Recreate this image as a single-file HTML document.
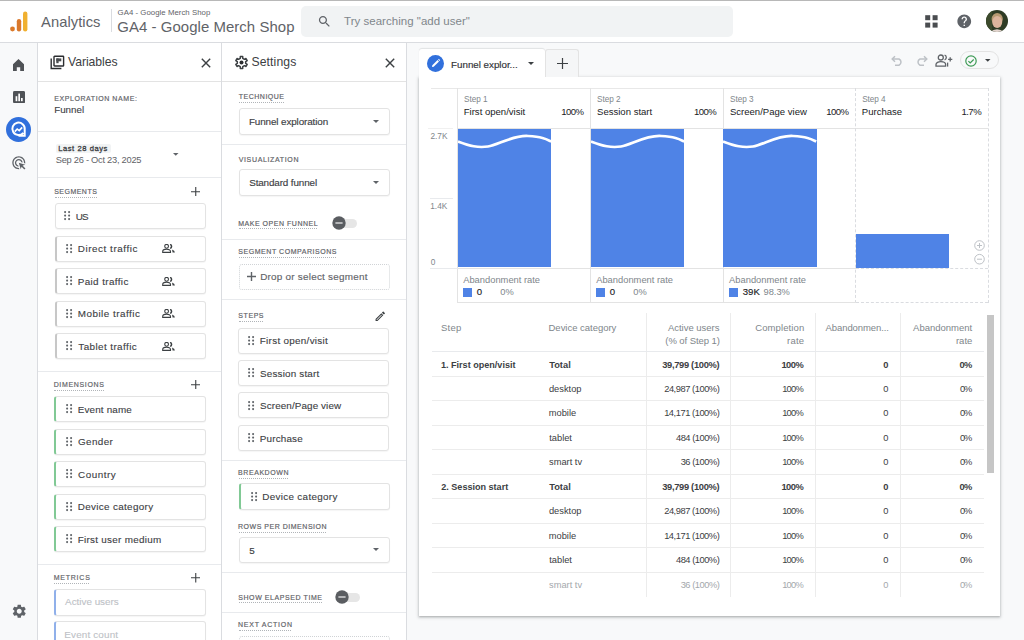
<!DOCTYPE html><html><head><meta charset="utf-8"><style>
html,body{margin:0;padding:0;}
body{width:1024px;height:640px;overflow:hidden;position:relative;background:#f8f9fa;font-family:"Liberation Sans",sans-serif;}
svg{display:block}
</style></head><body>
<div style="position:absolute;left:0px;top:0px;width:1024px;height:43px;background:#fff"></div>
<div style="position:absolute;left:0px;top:0px;width:1024px;height:1px;background:#b8b8b8"></div>
<div style="position:absolute;left:0px;top:42px;width:1024px;height:1px;background:#dadce0"></div>
<svg style="position:absolute;left:9px;top:11px;" width="20" height="22" viewBox="0 0 20 22"><circle cx="3.5" cy="18" r="2.4" fill="#dc7a2a"/><rect x="7.8" y="8" width="4.4" height="12.4" rx="2.2" fill="#d9782c"/><rect x="14" y="0.6" width="4.4" height="19.8" rx="2.2" fill="#f0b030"/></svg>
<div style="position:absolute;left:41.00px;top:15.00px;font-size:14.74px;line-height:14.74px;color:#5f6368;font-weight:normal;letter-spacing:0.060px;white-space:nowrap;">Analytics</div>
<div style="position:absolute;left:111px;top:9px;width:1px;height:23px;background:#dadce0"></div>
<div style="position:absolute;left:117.61px;top:9.00px;font-size:7.8px;line-height:7.8px;color:#5f6368;font-weight:normal;letter-spacing:0.034px;white-space:nowrap;">GA4 - Google Merch Shop</div>
<div style="position:absolute;left:117.25px;top:20.00px;font-size:14.94px;line-height:14.94px;color:#5f6368;font-weight:normal;letter-spacing:0.055px;white-space:nowrap;">GA4 - Google Merch Shop</div>
<div style="position:absolute;left:301px;top:6px;width:432px;height:31px;background:#f1f3f4;border-radius:5px"></div>
<svg style="position:absolute;left:317.0px;top:14.0px;" width="15" height="15" viewBox="0 0 24 24"><path fill="#5f6368" d="M15.5 14h-.79l-.28-.27C15.41 12.59 16 11.11 16 9.5 16 5.91 13.09 3 9.5 3S3 5.910 3 9.5 5.91 16 9.5 16c1.61 0 3.09-.59 4.230-1.57l.27.28v.79l5 4.99L20.49 19l-4.99-5zm-6 0C7.01 14 5 11.99 5 9.5S7.01 5 9.5 5 14 7.01 14 9.5 11.99 14 9.5 14z"/></svg>
<div style="position:absolute;left:344.07px;top:16.00px;font-size:11.47px;line-height:11.47px;color:#80868b;font-weight:normal;letter-spacing:0.034px;white-space:nowrap;">Try searching "add user"</div>
<svg style="position:absolute;left:925.3px;top:14.8px;" width="13" height="13" viewBox="0 0 13 13"><rect x="0.2" y="0.2" width="5" height="5" fill="#4a4d50"/><rect x="7.6" y="0.2" width="5" height="5" fill="#4a4d50"/><rect x="0.2" y="7.6" width="5" height="5" fill="#4a4d50"/><rect x="7.6" y="7.6" width="5" height="5" fill="#4a4d50"/></svg>
<svg style="position:absolute;left:956.25px;top:12.95px;" width="16.5" height="16.5" viewBox="0 0 24 24"><path fill="#5f6368" d="M12 2C6.48 2 2 6.48 2 12s4.48 10 10 10 10-4.48 10-10S17.52 2 12 2zm1 17h-2v-2h2v2zm2.07-7.75l-.9.92C13.45 12.9 13 13.5 13 15h-2v-.5c0-1.1.45-2.1 1.17-2.83l1.24-1.26c.37-.36.59-.86.59-1.410 0-1.1-.9-2-2-2s-2 .9-2 2H8c0-2.21 1.79-4 4-4s4 1.79 4 4c0 .88-.36 1.68-.93 2.25z"/></svg>
<svg style="position:absolute;left:986px;top:10.2px;" width="22" height="22" viewBox="0 0 22 22"><defs><clipPath id="av"><circle cx="11" cy="11" r="11"/></clipPath></defs><g clip-path="url(#av)"><rect width="22" height="22" fill="#2e3b24"/><rect x="0" y="0" width="6" height="22" fill="#3c4a2c"/><ellipse cx="11.2" cy="9" rx="5.6" ry="6" fill="#b79a72"/><ellipse cx="11.2" cy="12" rx="5" ry="6" fill="#dcb49c"/><path d="M4 22 Q11 16.5 18 22z" fill="#e4d6d0"/></g></svg>
<div style="position:absolute;left:0px;top:43px;width:37px;height:597px;background:#f8f9fa"></div>
<div style="position:absolute;left:37px;top:43px;width:1px;height:597px;background:#dadce0"></div>
<svg style="position:absolute;left:13.4px;top:58.8px;" width="11" height="12" viewBox="0 0 11 12"><path d="M0 5.3 L5.5 0 L11 5.3 V12 H7.2 V8.2 H3.8 V12 H0 Z" fill="#4f5256"/></svg>
<svg style="position:absolute;left:13px;top:91.3px;" width="12.2" height="12.2" viewBox="0 0 12.2 12.2"><rect width="12.2" height="12.2" rx="1.5" fill="#4f5256"/><rect x="2.6" y="5.2" width="1.7" height="5" fill="#fff"/><rect x="5.3" y="2.6" width="1.7" height="7.6" fill="#fff"/><rect x="8" y="7" width="1.7" height="3.2" fill="#fff"/></svg>
<svg style="position:absolute;left:6px;top:117.3px;" width="25" height="25" viewBox="0 0 25 25"><circle cx="12.5" cy="12.5" r="12.5" fill="#3170dc"/><path d="M17.3 15.8 A6.2 6.2 0 1 1 18.7 12.5 V18.7 H12.5" fill="none" stroke="#fff" stroke-width="2"/><path d="M8.8 14.6 L11.2 12 L13.2 13.6 L16.2 10.4" fill="none" stroke="#fff" stroke-width="1.6"/></svg>
<svg style="position:absolute;left:10.7px;top:154.7px;" width="15.6" height="15.6" viewBox="0 0 24 24"><path fill="#5f6368" d="M11.71 17.99C8.53 17.84 6 15.22 6 12c0-3.31 2.69-6 6-6 3.22 0 5.84 2.53 5.99 5.71l-2.1-.63C15.48 9.31 13.89 8 12 8c-2.21 0-4 1.790-4 4 0 1.89 1.31 3.48 3.08 3.89l.63 2.1zM22 12c0 .3-.01.6-.04.9l-1.97-.59c.01-.1.01-.21.01-.31 0-4.42-3.58-8-8-8s-8 3.58-8 8 3.58 8 8 8c.1 0 .21 0 .31-.01l.59 1.97c-.3.03-.6.04-.9.04-5.52 0-10-4.48-10-10S6.48 2 12 2s10 4.48 10 10zm-3.77 4.26L22 15l-10-3 3 10 1.26-3.77 4.27 4.27 1.74-1.74-4.27-4.27z"/></svg>
<svg style="position:absolute;left:10.75px;top:603.15px;" width="16.5" height="16.5" viewBox="0 0 24 24"><path fill="#5f6368" d="M19.14 12.94c.04-.3.06-.61.06-.94 0-.32-.02-.64-.07-.94l2.03-1.58c.18-.14.23-.41.12-.61l-1.92-3.32c-.12-.22-.37-.29-.59-.22l-2.39.96c-.5-.38-1.03-.7-1.62-.94l-.36-2.54c-.04-.24-.24-.41-.48-.41h-3.84c-.24 0-.43.17-.47.41l-.36 2.54c-.59.24-1.130.57-1.62.94l-2.39-.96c-.22-.08-.47 0-.59.22L2.74 8.87c-.12.21-.08.47.12.61l2.03 1.58c-.05.3-.09.63-.09.94s.02.64.07.94l-2.03 1.58c-.18.14-.23.41-.12.61l1.92 3.32c.12.22.37.29.59.22l2.39-.96c.5.38 1.03.7 1.62.94l.36 2.54c.05.24.24.41.48.41h3.84c.24 0 .44-.17.47-.41l.36-2.54c.59-.24 1.13-.56 1.62-.94l2.39.96c.22.08.47 0 .59-.22l1.92-3.32c.12-.22.07-.47-.12-.61l-2.01-1.58zM12 15.6c-1.98 0-3.6-1.62-3.6-3.6s1.62-3.6 3.6-3.6 3.6 1.62 3.6 3.6-1.62 3.6-3.6 3.6z"/></svg>
<div style="position:absolute;left:38px;top:43px;width:183px;height:597px;background:#fff"></div>
<div style="position:absolute;left:221px;top:43px;width:1px;height:597px;background:#dadce0"></div>
<svg style="position:absolute;left:49.5px;top:54.5px;" width="15" height="15" viewBox="0 0 15 15"><path d="M1.2 3.5 V13.5 H11.4" fill="none" stroke="#2b2d30" stroke-width="1.4"/><rect x="4" y="1.2" width="9.6" height="9.8" rx="0.6" fill="none" stroke="#2b2d30" stroke-width="1.4"/><rect x="6.3" y="3.4" width="5" height="2.9" fill="#4a4d50"/><rect x="6.3" y="3.4" width="2.3" height="4.8" fill="#4a4d50"/></svg>
<div style="position:absolute;left:68.00px;top:56.00px;font-size:12.2px;line-height:12.2px;color:#3c4043;font-weight:normal;letter-spacing:-0.041px;white-space:nowrap;">Variables</div>
<svg style="position:absolute;left:200.5px;top:57.8px;" width="10" height="10" viewBox="0 0 10 10"><path d="M0.8 0.8 L9.2 9.2 M9.2 0.8 L0.8 9.2" stroke="#3c4043" stroke-width="1.4"/></svg>
<div style="position:absolute;left:38px;top:81px;width:183px;height:1px;background:#e3e3e3"></div>
<div style="position:absolute;left:54.19px;top:95.00px;font-size:7.0px;line-height:7.0px;color:#5f6368;font-weight:normal;letter-spacing:0.579px;white-space:nowrap;-webkit-text-stroke:0.18px #5f6368;">EXPLORATION NAME:</div>
<div style="position:absolute;left:54.22px;top:105.00px;font-size:9.8px;line-height:9.8px;color:#3c4043;font-weight:normal;letter-spacing:-0.023px;white-space:nowrap;-webkit-text-stroke:0.1px #3c4043;">Funnel</div>
<div style="position:absolute;left:38px;top:131px;width:183px;height:1px;background:#e8eaed"></div>
<div style="position:absolute;left:56px;top:143.5px;width:55px;height:9.5px;background:#f1f3f4;border-radius:2px"></div>
<div style="position:absolute;left:58.19px;top:145.00px;font-size:7.6px;line-height:7.6px;color:#3c4043;font-weight:normal;letter-spacing:0.559px;white-space:nowrap;-webkit-text-stroke:0.3px #3c4043;">Last 28 days</div>
<div style="position:absolute;left:55.73px;top:156.00px;font-size:9.3px;line-height:9.3px;color:#5f6368;font-weight:normal;letter-spacing:-0.260px;white-space:nowrap;">Sep 26 - Oct 23, 2025</div>
<svg style="position:absolute;left:173.25px;top:153.125px;" width="5.5" height="2.75" viewBox="0 0 5.5 2.75"><path fill="#5f6368" d="M0 0L5.5 0L2.75 2.75z"/></svg>
<div style="position:absolute;left:38px;top:177px;width:183px;height:1px;background:#e8eaed"></div>
<div style="position:absolute;left:54.15px;top:188.00px;font-size:7.0px;line-height:7.0px;color:#5f6368;font-weight:normal;letter-spacing:0.490px;white-space:nowrap;-webkit-text-stroke:0.18px #5f6368;">SEGMENTS</div>
<div style="position:absolute;left:54.5px;top:197.0px;width:42.0px;height:0;border-top:1px dotted #b0b4b8"></div>
<svg style="position:absolute;left:190.85px;top:186.85px;" width="9.5" height="9.5" viewBox="0 0 9.5 9.5"><path d="M4.75 0 V9.5 M0 4.75 H9.5" stroke="#3c4043" stroke-width="1.1"/></svg>
<div style="position:absolute;left:54.6px;top:203.0px;width:151.20000000000002px;height:26px;background:#fff;border:1px solid #e3e3e3;border-radius:3px;box-sizing:border-box;box-shadow:0 1px 1px rgba(0,0,0,.04);"></div>
<svg style="position:absolute;left:64px;top:211.2px;" width="7" height="10" viewBox="0 0 7 10"><circle cx="1.10" cy="1.10" r="1.05" fill="#5f6368"/><circle cx="1.10" cy="4.60" r="1.05" fill="#5f6368"/><circle cx="1.10" cy="8.10" r="1.05" fill="#5f6368"/><circle cx="5.10" cy="1.10" r="1.05" fill="#5f6368"/><circle cx="5.10" cy="4.60" r="1.05" fill="#5f6368"/><circle cx="5.10" cy="8.10" r="1.05" fill="#5f6368"/></svg>
<div style="position:absolute;left:75.81px;top:212.00px;font-size:9.9px;line-height:9.9px;color:#3c4043;font-weight:normal;letter-spacing:-0.823px;white-space:nowrap;-webkit-text-stroke:0.12px #3c4043;">US</div>
<div style="position:absolute;left:54.6px;top:235.56px;width:151.20000000000002px;height:26px;background:#fff;border:1px solid #e3e3e3;border-radius:3px;box-sizing:border-box;box-shadow:0 1px 1px rgba(0,0,0,.04);border-left:2.5px solid #c7c7c7;"></div>
<svg style="position:absolute;left:65.8px;top:243.76px;" width="7" height="10" viewBox="0 0 7 10"><circle cx="1.10" cy="1.10" r="1.05" fill="#5f6368"/><circle cx="1.10" cy="4.60" r="1.05" fill="#5f6368"/><circle cx="1.10" cy="8.10" r="1.05" fill="#5f6368"/><circle cx="5.10" cy="1.10" r="1.05" fill="#5f6368"/><circle cx="5.10" cy="4.60" r="1.05" fill="#5f6368"/><circle cx="5.10" cy="8.10" r="1.05" fill="#5f6368"/></svg>
<div style="position:absolute;left:77.71px;top:244.00px;font-size:9.9px;line-height:9.9px;color:#3c4043;font-weight:normal;letter-spacing:0.552px;white-space:nowrap;-webkit-text-stroke:0.12px #3c4043;">Direct traffic</div>
<svg style="position:absolute;left:162px;top:244.36px;" width="13.5" height="9" viewBox="0 0 13.5 9"><circle cx="4.6" cy="2.3" r="1.9" fill="none" stroke="#3c4043" stroke-width="1.1"/><path d="M0.7 8.4 V7.4 C0.7 5.9 2.6 5.1 4.6 5.1 C6.6 5.1 8.5 5.9 8.5 7.4 V8.4 Z" fill="none" stroke="#3c4043" stroke-width="1.1"/><path d="M8.1 0.4 A2.1 2.1 0 0 1 8.1 4.4" fill="none" stroke="#3c4043" stroke-width="1.5"/><path d="M10 5.4 Q12.8 6.3 12.9 8.4 H10.6 Z" fill="#3c4043"/></svg>
<div style="position:absolute;left:54.6px;top:268.12px;width:151.20000000000002px;height:26px;background:#fff;border:1px solid #e3e3e3;border-radius:3px;box-sizing:border-box;box-shadow:0 1px 1px rgba(0,0,0,.04);border-left:2.5px solid #c7c7c7;"></div>
<svg style="position:absolute;left:65.8px;top:276.32px;" width="7" height="10" viewBox="0 0 7 10"><circle cx="1.10" cy="1.10" r="1.05" fill="#5f6368"/><circle cx="1.10" cy="4.60" r="1.05" fill="#5f6368"/><circle cx="1.10" cy="8.10" r="1.05" fill="#5f6368"/><circle cx="5.10" cy="1.10" r="1.05" fill="#5f6368"/><circle cx="5.10" cy="4.60" r="1.05" fill="#5f6368"/><circle cx="5.10" cy="8.10" r="1.05" fill="#5f6368"/></svg>
<div style="position:absolute;left:77.71px;top:277.00px;font-size:9.9px;line-height:9.9px;color:#3c4043;font-weight:normal;letter-spacing:0.383px;white-space:nowrap;-webkit-text-stroke:0.12px #3c4043;">Paid traffic</div>
<svg style="position:absolute;left:162px;top:276.92px;" width="13.5" height="9" viewBox="0 0 13.5 9"><circle cx="4.6" cy="2.3" r="1.9" fill="none" stroke="#3c4043" stroke-width="1.1"/><path d="M0.7 8.4 V7.4 C0.7 5.9 2.6 5.1 4.6 5.1 C6.6 5.1 8.5 5.9 8.5 7.4 V8.4 Z" fill="none" stroke="#3c4043" stroke-width="1.1"/><path d="M8.1 0.4 A2.1 2.1 0 0 1 8.1 4.4" fill="none" stroke="#3c4043" stroke-width="1.5"/><path d="M10 5.4 Q12.8 6.3 12.9 8.4 H10.6 Z" fill="#3c4043"/></svg>
<div style="position:absolute;left:54.6px;top:300.68px;width:151.20000000000002px;height:26px;background:#fff;border:1px solid #e3e3e3;border-radius:3px;box-sizing:border-box;box-shadow:0 1px 1px rgba(0,0,0,.04);border-left:2.5px solid #c7c7c7;"></div>
<svg style="position:absolute;left:65.8px;top:308.88px;" width="7" height="10" viewBox="0 0 7 10"><circle cx="1.10" cy="1.10" r="1.05" fill="#5f6368"/><circle cx="1.10" cy="4.60" r="1.05" fill="#5f6368"/><circle cx="1.10" cy="8.10" r="1.05" fill="#5f6368"/><circle cx="5.10" cy="1.10" r="1.05" fill="#5f6368"/><circle cx="5.10" cy="4.60" r="1.05" fill="#5f6368"/><circle cx="5.10" cy="8.10" r="1.05" fill="#5f6368"/></svg>
<div style="position:absolute;left:77.71px;top:309.00px;font-size:9.9px;line-height:9.9px;color:#3c4043;font-weight:normal;letter-spacing:0.493px;white-space:nowrap;-webkit-text-stroke:0.12px #3c4043;">Mobile traffic</div>
<svg style="position:absolute;left:162px;top:309.48px;" width="13.5" height="9" viewBox="0 0 13.5 9"><circle cx="4.6" cy="2.3" r="1.9" fill="none" stroke="#3c4043" stroke-width="1.1"/><path d="M0.7 8.4 V7.4 C0.7 5.9 2.6 5.1 4.6 5.1 C6.6 5.1 8.5 5.9 8.5 7.4 V8.4 Z" fill="none" stroke="#3c4043" stroke-width="1.1"/><path d="M8.1 0.4 A2.1 2.1 0 0 1 8.1 4.4" fill="none" stroke="#3c4043" stroke-width="1.5"/><path d="M10 5.4 Q12.8 6.3 12.9 8.4 H10.6 Z" fill="#3c4043"/></svg>
<div style="position:absolute;left:54.6px;top:333.24px;width:151.20000000000002px;height:26px;background:#fff;border:1px solid #e3e3e3;border-radius:3px;box-sizing:border-box;box-shadow:0 1px 1px rgba(0,0,0,.04);border-left:2.5px solid #c7c7c7;"></div>
<svg style="position:absolute;left:65.8px;top:341.44px;" width="7" height="10" viewBox="0 0 7 10"><circle cx="1.10" cy="1.10" r="1.05" fill="#5f6368"/><circle cx="1.10" cy="4.60" r="1.05" fill="#5f6368"/><circle cx="1.10" cy="8.10" r="1.05" fill="#5f6368"/><circle cx="5.10" cy="1.10" r="1.05" fill="#5f6368"/><circle cx="5.10" cy="4.60" r="1.05" fill="#5f6368"/><circle cx="5.10" cy="8.10" r="1.05" fill="#5f6368"/></svg>
<div style="position:absolute;left:78.30px;top:342.00px;font-size:9.9px;line-height:9.9px;color:#3c4043;font-weight:normal;letter-spacing:0.410px;white-space:nowrap;-webkit-text-stroke:0.12px #3c4043;">Tablet traffic</div>
<svg style="position:absolute;left:162px;top:342.04px;" width="13.5" height="9" viewBox="0 0 13.5 9"><circle cx="4.6" cy="2.3" r="1.9" fill="none" stroke="#3c4043" stroke-width="1.1"/><path d="M0.7 8.4 V7.4 C0.7 5.9 2.6 5.1 4.6 5.1 C6.6 5.1 8.5 5.9 8.5 7.4 V8.4 Z" fill="none" stroke="#3c4043" stroke-width="1.1"/><path d="M8.1 0.4 A2.1 2.1 0 0 1 8.1 4.4" fill="none" stroke="#3c4043" stroke-width="1.5"/><path d="M10 5.4 Q12.8 6.3 12.9 8.4 H10.6 Z" fill="#3c4043"/></svg>
<div style="position:absolute;left:38px;top:371px;width:183px;height:1px;background:#e8eaed"></div>
<div style="position:absolute;left:53.64px;top:381.00px;font-size:7.0px;line-height:7.0px;color:#5f6368;font-weight:normal;letter-spacing:0.670px;white-space:nowrap;-webkit-text-stroke:0.18px #5f6368;">DIMENSIONS</div>
<div style="position:absolute;left:54.2px;top:389.70000000000005px;width:49.5px;height:0;border-top:1px dotted #b0b4b8"></div>
<svg style="position:absolute;left:190.75px;top:379.95px;" width="9.5" height="9.5" viewBox="0 0 9.5 9.5"><path d="M4.75 0 V9.5 M0 4.75 H9.5" stroke="#3c4043" stroke-width="1.1"/></svg>
<div style="position:absolute;left:54.2px;top:396.0px;width:151.55px;height:26px;background:#fff;border:1px solid #e3e3e3;border-radius:3px;box-sizing:border-box;box-shadow:0 1px 1px rgba(0,0,0,.04);border-left:2.5px solid #81c995;"></div>
<svg style="position:absolute;left:65.8px;top:404.2px;" width="7" height="10" viewBox="0 0 7 10"><circle cx="1.10" cy="1.10" r="1.05" fill="#5f6368"/><circle cx="1.10" cy="4.60" r="1.05" fill="#5f6368"/><circle cx="1.10" cy="8.10" r="1.05" fill="#5f6368"/><circle cx="5.10" cy="1.10" r="1.05" fill="#5f6368"/><circle cx="5.10" cy="4.60" r="1.05" fill="#5f6368"/><circle cx="5.10" cy="8.10" r="1.05" fill="#5f6368"/></svg>
<div style="position:absolute;left:77.71px;top:405.00px;font-size:9.9px;line-height:9.9px;color:#3c4043;font-weight:normal;letter-spacing:0.158px;white-space:nowrap;-webkit-text-stroke:0.12px #3c4043;">Event name</div>
<div style="position:absolute;left:54.2px;top:428.5px;width:151.55px;height:26px;background:#fff;border:1px solid #e3e3e3;border-radius:3px;box-sizing:border-box;box-shadow:0 1px 1px rgba(0,0,0,.04);border-left:2.5px solid #81c995;"></div>
<svg style="position:absolute;left:65.8px;top:436.7px;" width="7" height="10" viewBox="0 0 7 10"><circle cx="1.10" cy="1.10" r="1.05" fill="#5f6368"/><circle cx="1.10" cy="4.60" r="1.05" fill="#5f6368"/><circle cx="1.10" cy="8.10" r="1.05" fill="#5f6368"/><circle cx="5.10" cy="1.10" r="1.05" fill="#5f6368"/><circle cx="5.10" cy="4.60" r="1.05" fill="#5f6368"/><circle cx="5.10" cy="8.10" r="1.05" fill="#5f6368"/></svg>
<div style="position:absolute;left:78.00px;top:437.00px;font-size:9.9px;line-height:9.9px;color:#3c4043;font-weight:normal;letter-spacing:0.375px;white-space:nowrap;-webkit-text-stroke:0.12px #3c4043;">Gender</div>
<div style="position:absolute;left:54.2px;top:461.0px;width:151.55px;height:26px;background:#fff;border:1px solid #e3e3e3;border-radius:3px;box-sizing:border-box;box-shadow:0 1px 1px rgba(0,0,0,.04);border-left:2.5px solid #81c995;"></div>
<svg style="position:absolute;left:65.8px;top:469.2px;" width="7" height="10" viewBox="0 0 7 10"><circle cx="1.10" cy="1.10" r="1.05" fill="#5f6368"/><circle cx="1.10" cy="4.60" r="1.05" fill="#5f6368"/><circle cx="1.10" cy="8.10" r="1.05" fill="#5f6368"/><circle cx="5.10" cy="1.10" r="1.05" fill="#5f6368"/><circle cx="5.10" cy="4.60" r="1.05" fill="#5f6368"/><circle cx="5.10" cy="8.10" r="1.05" fill="#5f6368"/></svg>
<div style="position:absolute;left:78.00px;top:470.00px;font-size:9.9px;line-height:9.9px;color:#3c4043;font-weight:normal;letter-spacing:0.516px;white-space:nowrap;-webkit-text-stroke:0.12px #3c4043;">Country</div>
<div style="position:absolute;left:54.2px;top:493.5px;width:151.55px;height:26px;background:#fff;border:1px solid #e3e3e3;border-radius:3px;box-sizing:border-box;box-shadow:0 1px 1px rgba(0,0,0,.04);border-left:2.5px solid #81c995;"></div>
<svg style="position:absolute;left:65.8px;top:501.7px;" width="7" height="10" viewBox="0 0 7 10"><circle cx="1.10" cy="1.10" r="1.05" fill="#5f6368"/><circle cx="1.10" cy="4.60" r="1.05" fill="#5f6368"/><circle cx="1.10" cy="8.10" r="1.05" fill="#5f6368"/><circle cx="5.10" cy="1.10" r="1.05" fill="#5f6368"/><circle cx="5.10" cy="4.60" r="1.05" fill="#5f6368"/><circle cx="5.10" cy="8.10" r="1.05" fill="#5f6368"/></svg>
<div style="position:absolute;left:77.71px;top:502.00px;font-size:9.9px;line-height:9.9px;color:#3c4043;font-weight:normal;letter-spacing:0.326px;white-space:nowrap;-webkit-text-stroke:0.12px #3c4043;">Device category</div>
<div style="position:absolute;left:54.2px;top:526.0px;width:151.55px;height:26px;background:#fff;border:1px solid #e3e3e3;border-radius:3px;box-sizing:border-box;box-shadow:0 1px 1px rgba(0,0,0,.04);border-left:2.5px solid #81c995;"></div>
<svg style="position:absolute;left:65.8px;top:534.2px;" width="7" height="10" viewBox="0 0 7 10"><circle cx="1.10" cy="1.10" r="1.05" fill="#5f6368"/><circle cx="1.10" cy="4.60" r="1.05" fill="#5f6368"/><circle cx="1.10" cy="8.10" r="1.05" fill="#5f6368"/><circle cx="5.10" cy="1.10" r="1.05" fill="#5f6368"/><circle cx="5.10" cy="4.60" r="1.05" fill="#5f6368"/><circle cx="5.10" cy="8.10" r="1.05" fill="#5f6368"/></svg>
<div style="position:absolute;left:77.71px;top:535.00px;font-size:9.9px;line-height:9.9px;color:#3c4043;font-weight:normal;letter-spacing:0.277px;white-space:nowrap;-webkit-text-stroke:0.12px #3c4043;">First user medium</div>
<div style="position:absolute;left:38px;top:564px;width:183px;height:1px;background:#e8eaed"></div>
<div style="position:absolute;left:53.64px;top:574.00px;font-size:7.0px;line-height:7.0px;color:#5f6368;font-weight:normal;letter-spacing:0.785px;white-space:nowrap;-webkit-text-stroke:0.18px #5f6368;">METRICS</div>
<div style="position:absolute;left:54.2px;top:582.6px;width:35.3px;height:0;border-top:1px dotted #b0b4b8"></div>
<svg style="position:absolute;left:190.75px;top:573.05px;" width="9.5" height="9.5" viewBox="0 0 9.5 9.5"><path d="M4.75 0 V9.5 M0 4.75 H9.5" stroke="#3c4043" stroke-width="1.1"/></svg>
<div style="position:absolute;left:54.2px;top:588.5px;width:151.55px;height:27px;background:#fff;border:1px solid #e3e3e3;border-radius:3px;box-sizing:border-box;box-shadow:0 1px 1px rgba(0,0,0,.04);border-left:2.5px solid #90b0ea;"></div>
<div style="position:absolute;left:65.10px;top:597.00px;font-size:9.9px;line-height:9.9px;color:#bdc1c6;font-weight:normal;letter-spacing:-0.014px;white-space:nowrap;-webkit-text-stroke:0.1px #bdc1c6;">Active users</div>
<div style="position:absolute;left:54.2px;top:621.1px;width:151.55px;height:27px;background:#fff;border:1px solid #e3e3e3;border-radius:3px;box-sizing:border-box;box-shadow:0 1px 1px rgba(0,0,0,.04);border-left:2.5px solid #90b0ea;"></div>
<div style="position:absolute;left:64.31px;top:630.00px;font-size:9.9px;line-height:9.9px;color:#bdc1c6;font-weight:normal;letter-spacing:0.162px;white-space:nowrap;-webkit-text-stroke:0.1px #bdc1c6;">Event count</div>
<div style="position:absolute;left:222px;top:43px;width:184px;height:597px;background:#fff"></div>
<div style="position:absolute;left:406px;top:43px;width:1px;height:597px;background:#dadce0"></div>
<svg style="position:absolute;left:233.5px;top:54.5px;" width="15" height="15" viewBox="0 0 15 15"><path d="M6.23 3.39 L6.31 1.62 L8.69 1.62 L8.77 3.39 L10.42 4.35 L12.00 3.53 L13.19 5.59 L11.69 6.55 L11.69 8.45 L13.19 9.41 L12.00 11.47 L10.42 10.65 L8.77 11.61 L8.69 13.38 L6.31 13.38 L6.23 11.61 L4.58 10.65 L3.00 11.47 L1.81 9.41 L3.31 8.45 L3.31 6.55 L1.81 5.59 L3.00 3.53 L4.58 4.35Z" fill="none" stroke="#3c4043" stroke-width="1.5" stroke-linejoin="round"/><circle cx="7.5" cy="7.5" r="2" fill="#2b2d30"/></svg>
<div style="position:absolute;left:251.39px;top:56.00px;font-size:12.2px;line-height:12.2px;color:#3c4043;font-weight:normal;letter-spacing:0.133px;white-space:nowrap;">Settings</div>
<svg style="position:absolute;left:384.5px;top:57.8px;" width="10" height="10" viewBox="0 0 10 10"><path d="M0.8 0.8 L9.2 9.2 M9.2 0.8 L0.8 9.2" stroke="#3c4043" stroke-width="1.4"/></svg>
<div style="position:absolute;left:222px;top:81px;width:184px;height:1px;background:#e3e3e3"></div>
<div style="position:absolute;left:238.86px;top:93.00px;font-size:7.0px;line-height:7.0px;color:#5f6368;font-weight:normal;letter-spacing:0.486px;white-space:nowrap;-webkit-text-stroke:0.18px #5f6368;">TECHNIQUE</div>
<div style="position:absolute;left:239px;top:102.0px;width:44.69999999999999px;height:0;border-top:1px dotted #b0b4b8"></div>
<div style="position:absolute;left:238.5px;top:107.5px;width:151px;height:27.0px;background:#fff;border:1px solid #e3e3e3;border-radius:3px;box-sizing:border-box;box-shadow:0 1px 1px rgba(0,0,0,.04)"></div>
<div style="position:absolute;left:248.91px;top:117.00px;font-size:9.9px;line-height:9.9px;color:#3c4043;font-weight:normal;letter-spacing:-0.117px;white-space:nowrap;-webkit-text-stroke:0.15px #3c4043;">Funnel exploration</div>
<svg style="position:absolute;left:372.8px;top:119.5px;" width="6" height="3.0" viewBox="0 0 6 3.0"><path fill="#5f6368" d="M0 0L6 0L3.0 3.0z"/></svg>
<div style="position:absolute;left:222px;top:144px;width:184px;height:1px;background:#e8eaed"></div>
<div style="position:absolute;left:238.70px;top:156.00px;font-size:7.0px;line-height:7.0px;color:#5f6368;font-weight:normal;letter-spacing:0.654px;white-space:nowrap;-webkit-text-stroke:0.18px #5f6368;">VISUALIZATION</div>
<div style="position:absolute;left:238.5px;top:169.3px;width:151px;height:26.399999999999977px;background:#fff;border:1px solid #e3e3e3;border-radius:3px;box-sizing:border-box;box-shadow:0 1px 1px rgba(0,0,0,.04)"></div>
<div style="position:absolute;left:249.20px;top:178.00px;font-size:9.9px;line-height:9.9px;color:#3c4043;font-weight:normal;letter-spacing:-0.129px;white-space:nowrap;-webkit-text-stroke:0.15px #3c4043;">Standard funnel</div>
<svg style="position:absolute;left:372.8px;top:181.0px;" width="6" height="3.0" viewBox="0 0 6 3.0"><path fill="#5f6368" d="M0 0L6 0L3.0 3.0z"/></svg>
<div style="position:absolute;left:238.14px;top:220.00px;font-size:7.0px;line-height:7.0px;color:#5f6368;font-weight:normal;letter-spacing:0.531px;white-space:nowrap;-webkit-text-stroke:0.18px #5f6368;">MAKE OPEN FUNNEL</div>
<div style="position:absolute;left:238.7px;top:228.29999999999998px;width:78.80000000000001px;height:0;border-top:1px dotted #b0b4b8"></div>
<div style="position:absolute;left:332.5px;top:218.9px;width:24px;height:9px;background:#e6e6e6;border-radius:5px"></div>
<svg style="position:absolute;left:331.5px;top:216.4px;" width="14" height="14" viewBox="0 0 14 14"><circle cx="7" cy="7" r="6.7" fill="#5a5d61"/><rect x="3.4" y="6.45" width="7.2" height="1.1" fill="#fff"/></svg>
<div style="position:absolute;left:222px;top:238.5px;width:184px;height:1px;background:#e8eaed"></div>
<div style="position:absolute;left:238.35px;top:248.00px;font-size:7.0px;line-height:7.0px;color:#5f6368;font-weight:normal;letter-spacing:0.538px;white-space:nowrap;-webkit-text-stroke:0.18px #5f6368;">SEGMENT COMPARISONS</div>
<div style="position:absolute;left:238.7px;top:257.1px;width:97.40000000000003px;height:0;border-top:1px dotted #b0b4b8"></div>
<div style="position:absolute;left:238.7px;top:263.8px;width:151.3px;height:25.9px;border:1px dotted #d0d3d6;border-radius:3px;box-sizing:border-box"></div>
<svg style="position:absolute;left:246.9px;top:271.9px;" width="9" height="9" viewBox="0 0 9 9"><path d="M4.5 0 V9 M0 4.5 H9" stroke="#5f6368" stroke-width="1.4"/></svg>
<div style="position:absolute;left:260.21px;top:272.00px;font-size:9.9px;line-height:9.9px;color:#5f6368;font-weight:normal;letter-spacing:0.244px;white-space:nowrap;-webkit-text-stroke:0.15px #5f6368;">Drop or select segment</div>
<div style="position:absolute;left:222px;top:298.5px;width:184px;height:1px;background:#e8eaed"></div>
<div style="position:absolute;left:238.35px;top:312.00px;font-size:7.0px;line-height:7.0px;color:#5f6368;font-weight:normal;letter-spacing:0.560px;white-space:nowrap;-webkit-text-stroke:0.18px #5f6368;">STEPS</div>
<div style="position:absolute;left:238.7px;top:321.1px;width:24.5px;height:0;border-top:1px dotted #b0b4b8"></div>
<svg style="position:absolute;left:373.65px;top:309.95px;" width="12.5" height="12.5" viewBox="0 0 24 24"><path fill="#3c4043" d="M3 17.25V21h3.75L17.81 9.94l-3.75-3.75L3 17.25zM5.92 19H5v-.92l9.06-9.06.92.92L5.92 19zM20.71 5.63l-2.34-2.34c-.2-.2-.45-.29-.71-.29s-.51.1-.7.29l-1.83 1.83 3.75 3.75 1.83-1.83c.39-.39.39-1.02 0-1.41z"/></svg>
<div style="position:absolute;left:238.4px;top:327.5px;width:150.99999999999997px;height:26px;background:#fff;border:1px solid #e3e3e3;border-radius:3px;box-sizing:border-box;box-shadow:0 1px 1px rgba(0,0,0,.04);"></div>
<svg style="position:absolute;left:247.8px;top:335.7px;" width="7" height="10" viewBox="0 0 7 10"><circle cx="1.10" cy="1.10" r="1.05" fill="#5f6368"/><circle cx="1.10" cy="4.60" r="1.05" fill="#5f6368"/><circle cx="1.10" cy="8.10" r="1.05" fill="#5f6368"/><circle cx="5.10" cy="1.10" r="1.05" fill="#5f6368"/><circle cx="5.10" cy="4.60" r="1.05" fill="#5f6368"/><circle cx="5.10" cy="8.10" r="1.05" fill="#5f6368"/></svg>
<div style="position:absolute;left:259.81px;top:336.00px;font-size:9.9px;line-height:9.9px;color:#3c4043;font-weight:normal;letter-spacing:0.289px;white-space:nowrap;-webkit-text-stroke:0.12px #3c4043;">First open/visit</div>
<div style="position:absolute;left:238.4px;top:359.9px;width:150.99999999999997px;height:26px;background:#fff;border:1px solid #e3e3e3;border-radius:3px;box-sizing:border-box;box-shadow:0 1px 1px rgba(0,0,0,.04);"></div>
<svg style="position:absolute;left:247.8px;top:368.09999999999997px;" width="7" height="10" viewBox="0 0 7 10"><circle cx="1.10" cy="1.10" r="1.05" fill="#5f6368"/><circle cx="1.10" cy="4.60" r="1.05" fill="#5f6368"/><circle cx="1.10" cy="8.10" r="1.05" fill="#5f6368"/><circle cx="5.10" cy="1.10" r="1.05" fill="#5f6368"/><circle cx="5.10" cy="4.60" r="1.05" fill="#5f6368"/><circle cx="5.10" cy="8.10" r="1.05" fill="#5f6368"/></svg>
<div style="position:absolute;left:260.11px;top:369.00px;font-size:9.9px;line-height:9.9px;color:#3c4043;font-weight:normal;letter-spacing:0.164px;white-space:nowrap;-webkit-text-stroke:0.12px #3c4043;">Session start</div>
<div style="position:absolute;left:238.4px;top:392.3px;width:150.99999999999997px;height:26px;background:#fff;border:1px solid #e3e3e3;border-radius:3px;box-sizing:border-box;box-shadow:0 1px 1px rgba(0,0,0,.04);"></div>
<svg style="position:absolute;left:247.8px;top:400.5px;" width="7" height="10" viewBox="0 0 7 10"><circle cx="1.10" cy="1.10" r="1.05" fill="#5f6368"/><circle cx="1.10" cy="4.60" r="1.05" fill="#5f6368"/><circle cx="1.10" cy="8.10" r="1.05" fill="#5f6368"/><circle cx="5.10" cy="1.10" r="1.05" fill="#5f6368"/><circle cx="5.10" cy="4.60" r="1.05" fill="#5f6368"/><circle cx="5.10" cy="8.10" r="1.05" fill="#5f6368"/></svg>
<div style="position:absolute;left:260.11px;top:401.00px;font-size:9.9px;line-height:9.9px;color:#3c4043;font-weight:normal;letter-spacing:0.093px;white-space:nowrap;-webkit-text-stroke:0.12px #3c4043;">Screen/Page view</div>
<div style="position:absolute;left:238.4px;top:424.7px;width:150.99999999999997px;height:26px;background:#fff;border:1px solid #e3e3e3;border-radius:3px;box-sizing:border-box;box-shadow:0 1px 1px rgba(0,0,0,.04);"></div>
<svg style="position:absolute;left:247.8px;top:432.9px;" width="7" height="10" viewBox="0 0 7 10"><circle cx="1.10" cy="1.10" r="1.05" fill="#5f6368"/><circle cx="1.10" cy="4.60" r="1.05" fill="#5f6368"/><circle cx="1.10" cy="8.10" r="1.05" fill="#5f6368"/><circle cx="5.10" cy="1.10" r="1.05" fill="#5f6368"/><circle cx="5.10" cy="4.60" r="1.05" fill="#5f6368"/><circle cx="5.10" cy="8.10" r="1.05" fill="#5f6368"/></svg>
<div style="position:absolute;left:259.81px;top:434.00px;font-size:9.9px;line-height:9.9px;color:#3c4043;font-weight:normal;letter-spacing:0.159px;white-space:nowrap;-webkit-text-stroke:0.12px #3c4043;">Purchase</div>
<div style="position:absolute;left:222px;top:460px;width:184px;height:1px;background:#e8eaed"></div>
<div style="position:absolute;left:238.04px;top:469.00px;font-size:7.0px;line-height:7.0px;color:#5f6368;font-weight:normal;letter-spacing:0.571px;white-space:nowrap;-webkit-text-stroke:0.18px #5f6368;">BREAKDOWN</div>
<div style="position:absolute;left:238.6px;top:477.8px;width:49.29999999999998px;height:0;border-top:1px dotted #b0b4b8"></div>
<div style="position:absolute;left:238.5px;top:483.3px;width:151.10000000000002px;height:27.2px;background:#fff;border:1px solid #e3e3e3;border-radius:3px;box-sizing:border-box;box-shadow:0 1px 1px rgba(0,0,0,.04);border-left:2.5px solid #81c995;"></div>
<svg style="position:absolute;left:250.5px;top:491.5px;" width="7" height="10" viewBox="0 0 7 10"><circle cx="1.10" cy="1.10" r="1.05" fill="#5f6368"/><circle cx="1.10" cy="4.60" r="1.05" fill="#5f6368"/><circle cx="1.10" cy="8.10" r="1.05" fill="#5f6368"/><circle cx="5.10" cy="1.10" r="1.05" fill="#5f6368"/><circle cx="5.10" cy="4.60" r="1.05" fill="#5f6368"/><circle cx="5.10" cy="8.10" r="1.05" fill="#5f6368"/></svg>
<div style="position:absolute;left:262.21px;top:492.00px;font-size:9.9px;line-height:9.9px;color:#3c4043;font-weight:normal;letter-spacing:0.315px;white-space:nowrap;-webkit-text-stroke:0.12px #3c4043;">Device category</div>
<div style="position:absolute;left:238.04px;top:523.00px;font-size:7.0px;line-height:7.0px;color:#5f6368;font-weight:normal;letter-spacing:0.517px;white-space:nowrap;-webkit-text-stroke:0.18px #5f6368;">ROWS PER DIMENSION</div>
<div style="position:absolute;left:238.6px;top:531.9px;width:87.4px;height:0;border-top:1px dotted #b0b4b8"></div>
<div style="position:absolute;left:238.5px;top:536.5px;width:151px;height:26.899999999999977px;background:#fff;border:1px solid #e3e3e3;border-radius:3px;box-sizing:border-box;box-shadow:0 1px 1px rgba(0,0,0,.04)"></div>
<div style="position:absolute;left:249.30px;top:546.00px;font-size:9.9px;line-height:9.9px;color:#3c4043;font-weight:normal;white-space:nowrap;-webkit-text-stroke:0.15px #3c4043;">5</div>
<svg style="position:absolute;left:372.8px;top:548.45px;" width="6" height="3.0" viewBox="0 0 6 3.0"><path fill="#5f6368" d="M0 0L6 0L3.0 3.0z"/></svg>
<div style="position:absolute;left:222px;top:572px;width:184px;height:1px;background:#e8eaed"></div>
<div style="position:absolute;left:238.25px;top:594.00px;font-size:7.0px;line-height:7.0px;color:#5f6368;font-weight:normal;letter-spacing:0.574px;white-space:nowrap;-webkit-text-stroke:0.18px #5f6368;">SHOW ELAPSED TIME</div>
<div style="position:absolute;left:238.6px;top:602.1px;width:83.1px;height:0;border-top:1px dotted #b0b4b8"></div>
<div style="position:absolute;left:336px;top:592.5px;width:24px;height:9px;background:#e6e6e6;border-radius:5px"></div>
<svg style="position:absolute;left:335px;top:590.0px;" width="14" height="14" viewBox="0 0 14 14"><circle cx="7" cy="7" r="6.7" fill="#5a5d61"/><rect x="3.4" y="6.45" width="7.2" height="1.1" fill="#fff"/></svg>
<div style="position:absolute;left:222px;top:612px;width:184px;height:1px;background:#e8eaed"></div>
<div style="position:absolute;left:238.04px;top:621.00px;font-size:7.0px;line-height:7.0px;color:#5f6368;font-weight:normal;letter-spacing:0.737px;white-space:nowrap;-webkit-text-stroke:0.18px #5f6368;">NEXT ACTION</div>
<div style="position:absolute;left:238.6px;top:629.6px;width:52.79999999999998px;height:0;border-top:1px dotted #b0b4b8"></div>
<div style="position:absolute;left:238.5px;top:636px;width:151px;height:20px;background:#fff;border:1px dotted #d0d3d6;border-radius:3px;box-sizing:border-box"></div>
<div style="position:absolute;left:419.4px;top:77px;width:580.2px;height:538.5px;background:#fff;box-shadow:0 1px 2px rgba(60,64,67,.3),0 1px 3px 1px rgba(60,64,67,.15)"></div>
<div style="position:absolute;left:419.4px;top:49px;width:125.6px;height:28.5px;background:#fff;border-radius:3px 3px 0 0;box-shadow:0 -1px 1px rgba(60,64,67,.12)"></div>
<div style="position:absolute;left:545px;top:49px;width:34.3px;height:28px;background:#f5f6f7;border:1px solid #e3e3e3;border-bottom:none;border-radius:3px 3px 0 0;box-sizing:border-box"></div>
<svg style="position:absolute;left:427px;top:54.8px;" width="17" height="17" viewBox="0 0 17 17"><circle cx="8.5" cy="8.5" r="8.5" fill="#3170dc"/><path d="M5 12 L5.3 10.3 L10.6 5 L12 6.4 L6.7 11.7 Z" fill="#fff"/><path d="M11.1 4.5 L11.8 3.8 L13.2 5.2 L12.5 5.9 Z" fill="#fff"/></svg>
<div style="position:absolute;left:451.12px;top:60.00px;font-size:9.8px;line-height:9.8px;color:#303134;font-weight:normal;letter-spacing:-0.024px;white-space:nowrap;-webkit-text-stroke:0.15px #303134;">Funnel explor...</div>
<svg style="position:absolute;left:528.0px;top:61.5px;" width="6" height="3.0" viewBox="0 0 6 3.0"><path fill="#3c4043" d="M0 0L6 0L3.0 3.0z"/></svg>
<svg style="position:absolute;left:556.7px;top:57.5px;" width="11" height="11" viewBox="0 0 11 11"><path d="M5.5 0 V11 M0 5.5 H11" stroke="#3c4043" stroke-width="1.2"/></svg>
<svg style="position:absolute;left:890.5px;top:54.5px;" width="13" height="11" viewBox="0 0 13 11"><path d="M4 1.2 L1.2 4 L4 6.8" fill="none" stroke="#bdc1c6" stroke-width="1.5"/><path d="M1.5 4 H8 A3.4 3.4 0 0 1 8 10.2 H4" fill="none" stroke="#bdc1c6" stroke-width="1.5"/></svg>
<svg style="position:absolute;left:914.5px;top:54.5px;" width="13" height="11" viewBox="0 0 13 11"><path d="M9 1.2 L11.8 4 L9 6.8" fill="none" stroke="#bdc1c6" stroke-width="1.5"/><path d="M11.5 4 H5 A3.4 3.4 0 0 0 5 10.2 H9" fill="none" stroke="#bdc1c6" stroke-width="1.5"/></svg>
<svg style="position:absolute;left:934.5px;top:53.8px;" width="18" height="13" viewBox="0 0 18 13"><circle cx="5.8" cy="3.5" r="2.5" fill="none" stroke="#5f6368" stroke-width="1.3"/><path d="M1 12.2 V10.6 C1 8.6 3.4 7.6 5.8 7.6 C8.2 7.6 10.6 8.6 10.6 10.6 V12.2 Z" fill="none" stroke="#5f6368" stroke-width="1.3"/><path d="M9.6 1.2 A2.4 2.4 0 0 1 9.6 5.8" fill="none" stroke="#5f6368" stroke-width="1.3"/><path d="M12.6 8.6 V12.6" stroke="#5f6368" stroke-width="1.3"/><path d="M15.2 3.3 V7.5 M13.1 5.4 H17.3" stroke="#5f6368" stroke-width="1.3"/></svg>
<div style="position:absolute;left:959.6px;top:51.3px;width:39.6px;height:18px;border:1px solid #e3e3e3;border-radius:9px;box-sizing:border-box;background:#f8f9fa"></div>
<svg style="position:absolute;left:964.6px;top:54.5px;" width="12" height="12" viewBox="0 0 12 12"><circle cx="6" cy="6" r="5.2" fill="none" stroke="#3c9a54" stroke-width="1.2"/><path d="M3.4 6.2 L5.2 8 L8.7 4.5" fill="none" stroke="#3c9a54" stroke-width="1.2"/></svg>
<svg style="position:absolute;left:985.25px;top:58.925px;" width="5.5" height="2.75" viewBox="0 0 5.5 2.75"><path fill="#3c4043" d="M0 0L5.5 0L2.75 2.75z"/></svg>
<div style="position:absolute;left:431px;top:87.6px;width:557.2px;height:1px;background:#e8e8e8"></div>
<div style="position:absolute;left:457.5px;top:128px;width:530.7px;height:1px;background:#e3e3e3"></div>
<div style="position:absolute;left:464.09px;top:96.00px;font-size:8.2px;line-height:8.2px;color:#80868b;font-weight:normal;letter-spacing:-0.016px;white-space:nowrap;">Step 1</div>
<div style="position:absolute;left:597.09px;top:96.00px;font-size:8.2px;line-height:8.2px;color:#80868b;font-weight:normal;letter-spacing:-0.016px;white-space:nowrap;">Step 2</div>
<div style="position:absolute;left:729.99px;top:96.00px;font-size:8.2px;line-height:8.2px;color:#80868b;font-weight:normal;letter-spacing:-0.016px;white-space:nowrap;">Step 3</div>
<div style="position:absolute;left:862.19px;top:96.00px;font-size:8.2px;line-height:8.2px;color:#80868b;font-weight:normal;letter-spacing:-0.048px;white-space:nowrap;">Step 4</div>
<div style="position:absolute;left:463.74px;top:107.00px;font-size:9.55px;line-height:9.55px;color:#202124;font-weight:normal;white-space:nowrap;">First open/visit</div>
<div style="position:absolute;right:440.59px;top:107.00px;font-size:9.55px;line-height:9.55px;color:#202124;font-weight:normal;letter-spacing:-0.548px;white-space:nowrap;">100%</div>
<div style="position:absolute;left:597.02px;top:107.00px;font-size:9.55px;line-height:9.55px;color:#202124;font-weight:normal;white-space:nowrap;">Session start</div>
<div style="position:absolute;right:307.69px;top:107.00px;font-size:9.55px;line-height:9.55px;color:#202124;font-weight:normal;letter-spacing:-0.548px;white-space:nowrap;">100%</div>
<div style="position:absolute;left:729.92px;top:107.00px;font-size:9.55px;line-height:9.55px;color:#202124;font-weight:normal;white-space:nowrap;">Screen/Page view</div>
<div style="position:absolute;right:175.49px;top:107.00px;font-size:9.55px;line-height:9.55px;color:#202124;font-weight:normal;letter-spacing:-0.548px;white-space:nowrap;">100%</div>
<div style="position:absolute;left:861.84px;top:107.00px;font-size:9.55px;line-height:9.55px;color:#202124;font-weight:normal;white-space:nowrap;">Purchase</div>
<div style="position:absolute;right:42.81px;top:107.00px;font-size:9.55px;line-height:9.55px;color:#202124;font-weight:normal;letter-spacing:-0.486px;white-space:nowrap;">1.7%</div>
<div style="position:absolute;left:457.0px;top:88px;width:1px;height:214.5px;background:#e3e3e3"></div>
<div style="position:absolute;left:590.0px;top:88px;width:1px;height:214.5px;background:#e3e3e3"></div>
<div style="position:absolute;left:722.9px;top:88px;width:1px;height:214.5px;background:#e3e3e3"></div>
<div style="position:absolute;left:855.1px;top:88px;width:0;height:214.5px;border-left:1px dashed #dadce0"></div>
<div style="position:absolute;left:987.7px;top:88px;width:0;height:214.5px;border-left:1px dashed #dadce0"></div>
<div style="position:absolute;left:457.5px;top:129px;width:93.2px;height:138.4px;background:#4f83e6"></div>
<svg style="position:absolute;left:457.5px;top:128.6px;" width="93.2" height="22" viewBox="0 0 93.2 22"><path d="M0 12.5 C 12 17, 20 19, 30 17.5 S 55 6, 70 7 S 88 10, 93.2 12.5" fill="none" stroke="#fff" stroke-width="2.7"/></svg>
<div style="position:absolute;left:590.5px;top:129px;width:93.2px;height:138.4px;background:#4f83e6"></div>
<svg style="position:absolute;left:590.5px;top:128.6px;" width="93.2" height="22" viewBox="0 0 93.2 22"><path d="M0 12.5 C 12 17, 20 19, 30 17.5 S 55 6, 70 7 S 88 10, 93.2 12.5" fill="none" stroke="#fff" stroke-width="2.7"/></svg>
<div style="position:absolute;left:723.4px;top:129px;width:93.2px;height:138.4px;background:#4f83e6"></div>
<svg style="position:absolute;left:723.4px;top:128.6px;" width="93.2" height="22" viewBox="0 0 93.2 22"><path d="M0 12.5 C 12 17, 20 19, 30 17.5 S 55 6, 70 7 S 88 10, 93.2 12.5" fill="none" stroke="#fff" stroke-width="2.7"/></svg>
<div style="position:absolute;left:855.6px;top:234px;width:93.3px;height:33.5px;background:#4f83e6"></div>
<div style="position:absolute;left:430.38px;top:132.00px;font-size:8.3px;line-height:8.3px;color:#80868b;font-weight:normal;white-space:nowrap;">2.7K</div>
<div style="position:absolute;left:430.22px;top:202.00px;font-size:8.3px;line-height:8.3px;color:#80868b;font-weight:normal;white-space:nowrap;">1.4K</div>
<div style="position:absolute;left:430.67px;top:258.00px;font-size:8.3px;line-height:8.3px;color:#80868b;font-weight:normal;white-space:nowrap;">0</div>
<div style="position:absolute;left:428px;top:128.2px;width:25px;height:1px;background:#f0f0f0"></div>
<div style="position:absolute;left:430px;top:198px;width:23px;height:1px;background:#e8eaed"></div>
<div style="position:absolute;left:430px;top:267.5px;width:27.5px;height:1px;background:#e8eaed"></div>
<div style="position:absolute;left:457.5px;top:267.5px;width:398.1px;height:1px;background:#e3e3e3"></div>
<div style="position:absolute;left:855.6px;top:268px;width:132.60000000000002px;height:0;border-top:1px dashed #dadce0"></div>
<div style="position:absolute;left:457.5px;top:302.3px;width:398.1px;height:1px;background:#e3e3e3"></div>
<div style="position:absolute;left:855.6px;top:302.3px;width:132.60000000000002px;height:0;border-top:1px dashed #dadce0"></div>
<div style="position:absolute;left:463.20px;top:276.00px;font-size:9.36px;line-height:9.36px;color:#80868b;font-weight:normal;white-space:nowrap;">Abandonment rate</div>
<div style="position:absolute;left:462.8px;top:287.6px;width:9.2px;height:9px;background:#4f83e6"></div>
<div style="position:absolute;left:476.82px;top:287.00px;font-size:9.6px;line-height:9.6px;color:#202124;font-weight:normal;white-space:nowrap;-webkit-text-stroke:0.15px #202124;">0</div>
<div style="position:absolute;left:500.33px;top:288.00px;font-size:9.3px;line-height:9.3px;color:#80868b;font-weight:normal;white-space:nowrap;">0%</div>
<div style="position:absolute;left:596.20px;top:276.00px;font-size:9.36px;line-height:9.36px;color:#80868b;font-weight:normal;white-space:nowrap;">Abandonment rate</div>
<div style="position:absolute;left:595.8px;top:287.6px;width:9.2px;height:9px;background:#4f83e6"></div>
<div style="position:absolute;left:609.82px;top:287.00px;font-size:9.6px;line-height:9.6px;color:#202124;font-weight:normal;white-space:nowrap;-webkit-text-stroke:0.15px #202124;">0</div>
<div style="position:absolute;left:633.33px;top:288.00px;font-size:9.3px;line-height:9.3px;color:#80868b;font-weight:normal;white-space:nowrap;">0%</div>
<div style="position:absolute;left:729.10px;top:276.00px;font-size:9.36px;line-height:9.36px;color:#80868b;font-weight:normal;white-space:nowrap;">Abandonment rate</div>
<div style="position:absolute;left:728.6999999999999px;top:287.6px;width:9.2px;height:9px;background:#4f83e6"></div>
<div style="position:absolute;left:742.72px;top:287.00px;font-size:9.6px;line-height:9.6px;color:#202124;font-weight:normal;white-space:nowrap;-webkit-text-stroke:0.15px #202124;">39K</div>
<div style="position:absolute;left:763.53px;top:288.00px;font-size:9.3px;line-height:9.3px;color:#80868b;font-weight:normal;white-space:nowrap;">98.3%</div>
<svg style="position:absolute;left:973.5px;top:239.5px;" width="11" height="25" viewBox="0 0 11 25"><circle cx="5.5" cy="5.5" r="4.8" fill="none" stroke="#bdc1c6" stroke-width="1"/><path d="M5.5 3 V8 M3 5.5 H8" stroke="#bdc1c6" stroke-width="1"/><circle cx="5.5" cy="19.2" r="4.8" fill="none" stroke="#bdc1c6" stroke-width="1"/><path d="M3 19.2 H8" stroke="#bdc1c6" stroke-width="1"/></svg>
<div style="position:absolute;left:646.4px;top:312.8px;width:1px;height:284.2px;background:#ececec"></div>
<div style="position:absolute;left:730.3px;top:312.8px;width:1px;height:284.2px;background:#ececec"></div>
<div style="position:absolute;left:815.3px;top:312.8px;width:1px;height:284.2px;background:#ececec"></div>
<div style="position:absolute;left:899.8px;top:312.8px;width:1px;height:284.2px;background:#ececec"></div>
<div style="position:absolute;left:441.02px;top:323.00px;font-size:9.5px;line-height:9.5px;color:#80868b;font-weight:normal;letter-spacing:0.262px;white-space:nowrap;">Step</div>
<div style="position:absolute;left:548.54px;top:323.00px;font-size:9.5px;line-height:9.5px;color:#80868b;font-weight:normal;letter-spacing:-0.025px;white-space:nowrap;">Device category</div>
<div style="position:absolute;right:304.57px;top:323.00px;font-size:9.5px;line-height:9.5px;color:#80868b;font-weight:normal;letter-spacing:-0.017px;white-space:nowrap;">Active users</div>
<div style="position:absolute;right:304.26px;top:336.00px;font-size:9.5px;line-height:9.5px;color:#80868b;font-weight:normal;letter-spacing:-0.079px;white-space:nowrap;">(% of Step 1)</div>
<div style="position:absolute;right:219.65px;top:323.00px;font-size:9.5px;line-height:9.5px;color:#80868b;font-weight:normal;letter-spacing:0.108px;white-space:nowrap;">Completion</div>
<div style="position:absolute;right:219.79px;top:336.00px;font-size:9.5px;line-height:9.5px;color:#80868b;font-weight:normal;letter-spacing:0.203px;white-space:nowrap;">rate</div>
<div style="position:absolute;right:135.22px;top:323.00px;font-size:9.5px;line-height:9.5px;color:#80868b;font-weight:normal;letter-spacing:-0.096px;white-space:nowrap;">Abandonmen...</div>
<div style="position:absolute;right:51.96px;top:323.00px;font-size:9.5px;line-height:9.5px;color:#80868b;font-weight:normal;letter-spacing:-0.019px;white-space:nowrap;">Abandonment</div>
<div style="position:absolute;right:51.56px;top:336.00px;font-size:9.5px;line-height:9.5px;color:#80868b;font-weight:normal;letter-spacing:0.037px;white-space:nowrap;">rate</div>
<div style="position:absolute;left:432px;top:351.3px;width:552px;height:1px;background:#e8eaed"></div>
<div style="position:absolute;left:440.96px;top:361.00px;font-size:9.07px;line-height:9.07px;color:#3c4043;font-weight:bold;white-space:nowrap;">1. First open/visit</div>
<div style="position:absolute;left:549.21px;top:361.00px;font-size:9.3px;line-height:9.3px;color:#3c4043;font-weight:bold;white-space:nowrap;">Total</div>
<div style="position:absolute;right:304.73px;top:361.00px;font-size:9.3px;line-height:9.3px;color:#3c4043;font-weight:bold;letter-spacing:-0.302px;white-space:nowrap;">39,799 (100%)</div>
<div style="position:absolute;right:220.70px;top:361.00px;font-size:9.3px;line-height:9.3px;color:#3c4043;font-weight:bold;letter-spacing:-0.461px;white-space:nowrap;">100%</div>
<div style="position:absolute;right:135.66px;top:361.00px;font-size:9.3px;line-height:9.3px;color:#3c4043;font-weight:bold;white-space:nowrap;">0</div>
<div style="position:absolute;right:52.63px;top:361.00px;font-size:9.3px;line-height:9.3px;color:#3c4043;font-weight:bold;letter-spacing:-0.776px;white-space:nowrap;">0%</div>
<div style="position:absolute;left:432px;top:375.77px;width:552px;height:1px;background:#ececec"></div>
<div style="position:absolute;left:548.93px;top:385.00px;font-size:9.3px;line-height:9.3px;color:#3c4043;font-weight:normal;white-space:nowrap;">desktop</div>
<div style="position:absolute;right:304.70px;top:385.00px;font-size:9.3px;line-height:9.3px;color:#3c4043;font-weight:normal;letter-spacing:-0.450px;white-space:nowrap;">24,987 (100%)</div>
<div style="position:absolute;right:220.83px;top:385.00px;font-size:9.3px;line-height:9.3px;color:#3c4043;font-weight:normal;letter-spacing:-0.686px;white-space:nowrap;">100%</div>
<div style="position:absolute;right:135.66px;top:385.00px;font-size:9.3px;line-height:9.3px;color:#3c4043;font-weight:normal;white-space:nowrap;">0</div>
<div style="position:absolute;right:52.92px;top:385.00px;font-size:9.3px;line-height:9.3px;color:#3c4043;font-weight:normal;letter-spacing:-1.155px;white-space:nowrap;">0%</div>
<div style="position:absolute;left:432px;top:400.24px;width:552px;height:1px;background:#ececec"></div>
<div style="position:absolute;left:548.74px;top:409.00px;font-size:9.3px;line-height:9.3px;color:#3c4043;font-weight:normal;white-space:nowrap;">mobile</div>
<div style="position:absolute;right:304.69px;top:409.00px;font-size:9.3px;line-height:9.3px;color:#3c4043;font-weight:normal;letter-spacing:-0.448px;white-space:nowrap;">14,171 (100%)</div>
<div style="position:absolute;right:220.83px;top:409.00px;font-size:9.3px;line-height:9.3px;color:#3c4043;font-weight:normal;letter-spacing:-0.686px;white-space:nowrap;">100%</div>
<div style="position:absolute;right:135.66px;top:409.00px;font-size:9.3px;line-height:9.3px;color:#3c4043;font-weight:normal;white-space:nowrap;">0</div>
<div style="position:absolute;right:52.92px;top:409.00px;font-size:9.3px;line-height:9.3px;color:#3c4043;font-weight:normal;letter-spacing:-1.155px;white-space:nowrap;">0%</div>
<div style="position:absolute;left:432px;top:424.71000000000004px;width:552px;height:1px;background:#ececec"></div>
<div style="position:absolute;left:549.21px;top:434.00px;font-size:9.3px;line-height:9.3px;color:#3c4043;font-weight:normal;white-space:nowrap;">tablet</div>
<div style="position:absolute;right:304.72px;top:434.00px;font-size:9.3px;line-height:9.3px;color:#3c4043;font-weight:normal;letter-spacing:-0.473px;white-space:nowrap;">484 (100%)</div>
<div style="position:absolute;right:220.83px;top:434.00px;font-size:9.3px;line-height:9.3px;color:#3c4043;font-weight:normal;letter-spacing:-0.686px;white-space:nowrap;">100%</div>
<div style="position:absolute;right:135.66px;top:434.00px;font-size:9.3px;line-height:9.3px;color:#3c4043;font-weight:normal;white-space:nowrap;">0</div>
<div style="position:absolute;right:52.92px;top:434.00px;font-size:9.3px;line-height:9.3px;color:#3c4043;font-weight:normal;letter-spacing:-1.155px;white-space:nowrap;">0%</div>
<div style="position:absolute;left:432px;top:449.18000000000006px;width:552px;height:1px;background:#ececec"></div>
<div style="position:absolute;left:549.02px;top:458.00px;font-size:9.3px;line-height:9.3px;color:#3c4043;font-weight:normal;white-space:nowrap;">smart tv</div>
<div style="position:absolute;right:304.68px;top:458.00px;font-size:9.3px;line-height:9.3px;color:#3c4043;font-weight:normal;letter-spacing:-0.472px;white-space:nowrap;">36 (100%)</div>
<div style="position:absolute;right:220.83px;top:458.00px;font-size:9.3px;line-height:9.3px;color:#3c4043;font-weight:normal;letter-spacing:-0.686px;white-space:nowrap;">100%</div>
<div style="position:absolute;right:135.66px;top:458.00px;font-size:9.3px;line-height:9.3px;color:#3c4043;font-weight:normal;white-space:nowrap;">0</div>
<div style="position:absolute;right:52.92px;top:458.00px;font-size:9.3px;line-height:9.3px;color:#3c4043;font-weight:normal;letter-spacing:-1.155px;white-space:nowrap;">0%</div>
<div style="position:absolute;left:432px;top:473.65px;width:552px;height:1px;background:#ececec"></div>
<div style="position:absolute;left:441.23px;top:483.00px;font-size:9.07px;line-height:9.07px;color:#3c4043;font-weight:bold;white-space:nowrap;">2. Session start</div>
<div style="position:absolute;left:549.21px;top:483.00px;font-size:9.3px;line-height:9.3px;color:#3c4043;font-weight:bold;white-space:nowrap;">Total</div>
<div style="position:absolute;right:304.73px;top:483.00px;font-size:9.3px;line-height:9.3px;color:#3c4043;font-weight:bold;letter-spacing:-0.302px;white-space:nowrap;">39,799 (100%)</div>
<div style="position:absolute;right:220.70px;top:483.00px;font-size:9.3px;line-height:9.3px;color:#3c4043;font-weight:bold;letter-spacing:-0.461px;white-space:nowrap;">100%</div>
<div style="position:absolute;right:135.66px;top:483.00px;font-size:9.3px;line-height:9.3px;color:#3c4043;font-weight:bold;white-space:nowrap;">0</div>
<div style="position:absolute;right:52.63px;top:483.00px;font-size:9.3px;line-height:9.3px;color:#3c4043;font-weight:bold;letter-spacing:-0.776px;white-space:nowrap;">0%</div>
<div style="position:absolute;left:432px;top:498.12px;width:552px;height:1px;background:#ececec"></div>
<div style="position:absolute;left:548.93px;top:507.00px;font-size:9.3px;line-height:9.3px;color:#3c4043;font-weight:normal;white-space:nowrap;">desktop</div>
<div style="position:absolute;right:304.70px;top:507.00px;font-size:9.3px;line-height:9.3px;color:#3c4043;font-weight:normal;letter-spacing:-0.450px;white-space:nowrap;">24,987 (100%)</div>
<div style="position:absolute;right:220.83px;top:507.00px;font-size:9.3px;line-height:9.3px;color:#3c4043;font-weight:normal;letter-spacing:-0.686px;white-space:nowrap;">100%</div>
<div style="position:absolute;right:135.66px;top:507.00px;font-size:9.3px;line-height:9.3px;color:#3c4043;font-weight:normal;white-space:nowrap;">0</div>
<div style="position:absolute;right:52.92px;top:507.00px;font-size:9.3px;line-height:9.3px;color:#3c4043;font-weight:normal;letter-spacing:-1.155px;white-space:nowrap;">0%</div>
<div style="position:absolute;left:432px;top:522.59px;width:552px;height:1px;background:#ececec"></div>
<div style="position:absolute;left:548.74px;top:532.00px;font-size:9.3px;line-height:9.3px;color:#3c4043;font-weight:normal;white-space:nowrap;">mobile</div>
<div style="position:absolute;right:304.69px;top:532.00px;font-size:9.3px;line-height:9.3px;color:#3c4043;font-weight:normal;letter-spacing:-0.448px;white-space:nowrap;">14,171 (100%)</div>
<div style="position:absolute;right:220.83px;top:532.00px;font-size:9.3px;line-height:9.3px;color:#3c4043;font-weight:normal;letter-spacing:-0.686px;white-space:nowrap;">100%</div>
<div style="position:absolute;right:135.66px;top:532.00px;font-size:9.3px;line-height:9.3px;color:#3c4043;font-weight:normal;white-space:nowrap;">0</div>
<div style="position:absolute;right:52.92px;top:532.00px;font-size:9.3px;line-height:9.3px;color:#3c4043;font-weight:normal;letter-spacing:-1.155px;white-space:nowrap;">0%</div>
<div style="position:absolute;left:432px;top:547.0600000000001px;width:552px;height:1px;background:#ececec"></div>
<div style="position:absolute;left:549.21px;top:556.00px;font-size:9.3px;line-height:9.3px;color:#3c4043;font-weight:normal;white-space:nowrap;">tablet</div>
<div style="position:absolute;right:304.72px;top:556.00px;font-size:9.3px;line-height:9.3px;color:#3c4043;font-weight:normal;letter-spacing:-0.473px;white-space:nowrap;">484 (100%)</div>
<div style="position:absolute;right:220.83px;top:556.00px;font-size:9.3px;line-height:9.3px;color:#3c4043;font-weight:normal;letter-spacing:-0.686px;white-space:nowrap;">100%</div>
<div style="position:absolute;right:135.66px;top:556.00px;font-size:9.3px;line-height:9.3px;color:#3c4043;font-weight:normal;white-space:nowrap;">0</div>
<div style="position:absolute;right:52.92px;top:556.00px;font-size:9.3px;line-height:9.3px;color:#3c4043;font-weight:normal;letter-spacing:-1.155px;white-space:nowrap;">0%</div>
<div style="position:absolute;left:432px;top:571.53px;width:552px;height:1px;background:#ececec"></div>
<div style="position:absolute;left:549.02px;top:581.00px;font-size:9.3px;line-height:9.3px;color:#a4a8ac;font-weight:normal;white-space:nowrap;">smart tv</div>
<div style="position:absolute;right:304.68px;top:581.00px;font-size:9.3px;line-height:9.3px;color:#a4a8ac;font-weight:normal;letter-spacing:-0.472px;white-space:nowrap;">36 (100%)</div>
<div style="position:absolute;right:220.83px;top:581.00px;font-size:9.3px;line-height:9.3px;color:#a4a8ac;font-weight:normal;letter-spacing:-0.686px;white-space:nowrap;">100%</div>
<div style="position:absolute;right:135.66px;top:581.00px;font-size:9.3px;line-height:9.3px;color:#a4a8ac;font-weight:normal;white-space:nowrap;">0</div>
<div style="position:absolute;right:52.92px;top:581.00px;font-size:9.3px;line-height:9.3px;color:#a4a8ac;font-weight:normal;letter-spacing:-1.155px;white-space:nowrap;">0%</div>
<div style="position:absolute;left:987.3px;top:314.6px;width:6.3px;height:158.6px;background:#c6c6c6"></div>
</body></html>
